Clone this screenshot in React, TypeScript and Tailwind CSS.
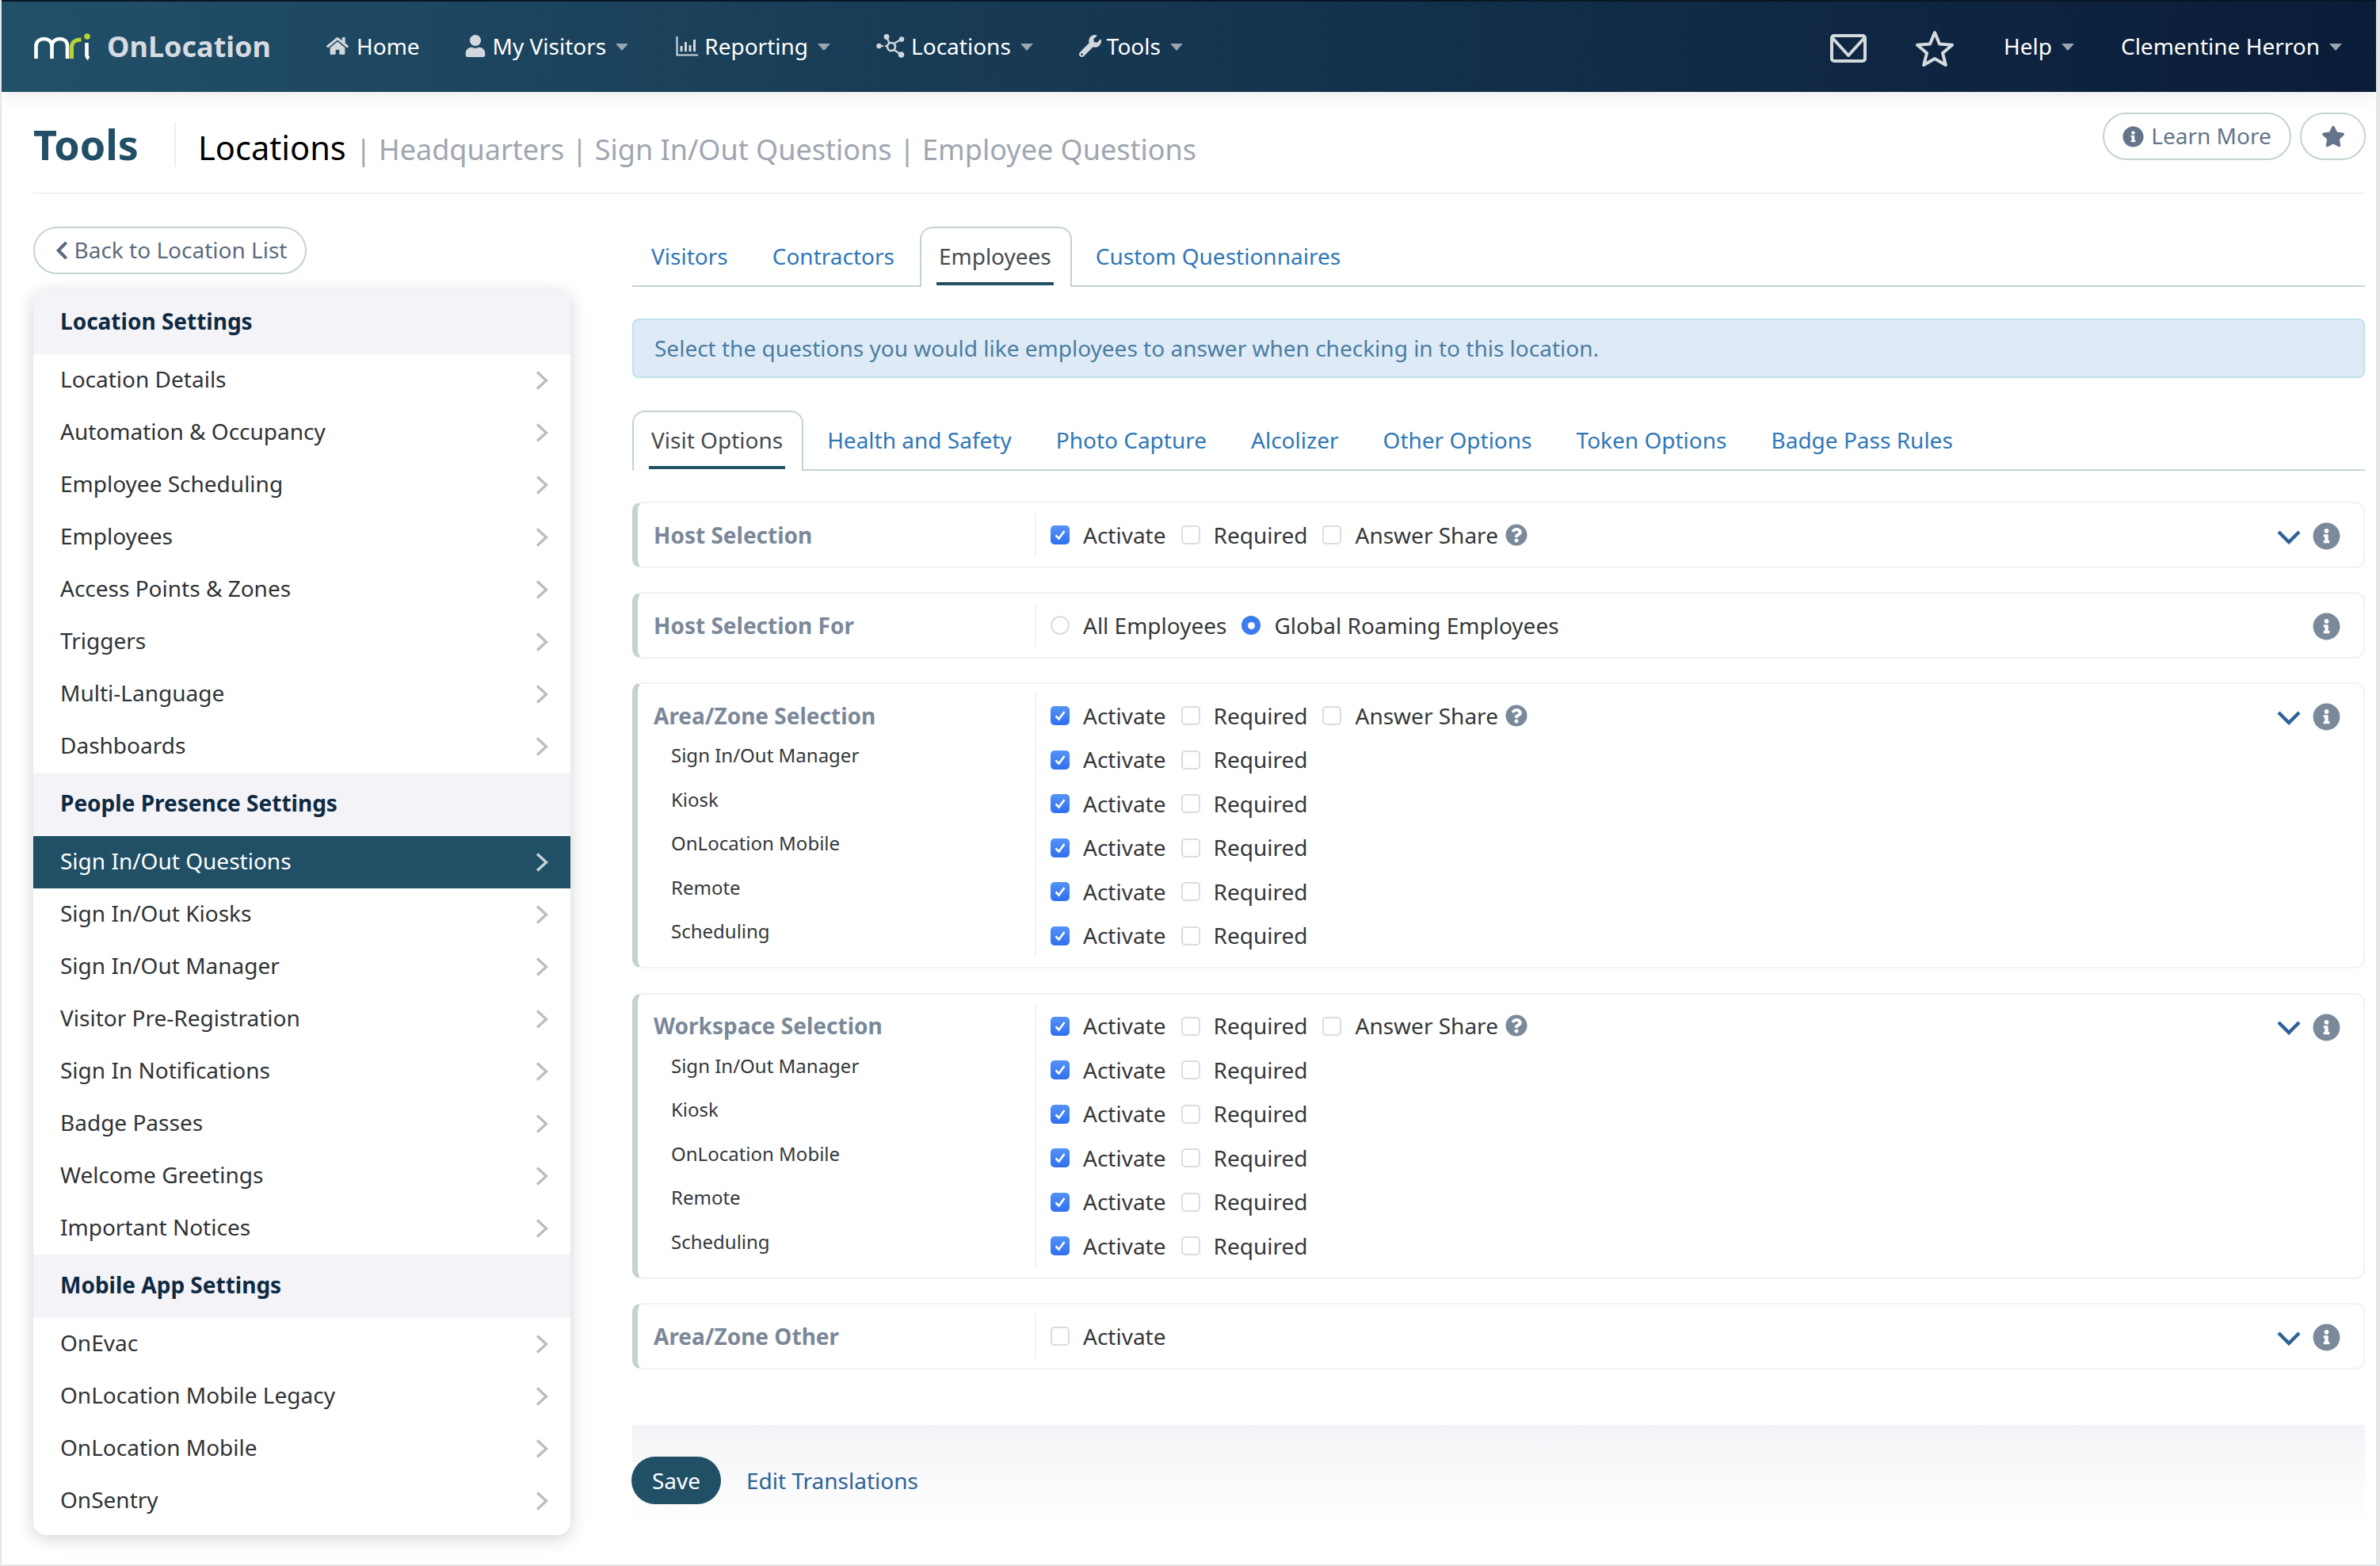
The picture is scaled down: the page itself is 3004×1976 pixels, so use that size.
import React from "react";
import { FaHome, FaUser, FaWrench, FaInfoCircle, FaQuestionCircle, FaStar, FaChevronLeft } from "react-icons/fa";

const Caret = () => (
  <span className="ml-[12px] mt-[3px] inline-block h-0 w-0 border-x-[8px] border-t-[9px] border-x-transparent border-t-[#9aa5ae]" />
);

const Logo = () => (
  <svg width="74" height="36" viewBox="0 0 74 36" fill="none" className="shrink-0">
    <path d="M3.5 33V17c0-6 5-9 10-9s10 3 10 9V33M23.5 17c0-6 5-9 10-9s9.500 3 9.500 9V33" stroke="#fff" strokeWidth="4.600" />
    <path d="M48.500 33V18c0-6 5-9 12-9" stroke="#b5d334" strokeWidth="5" />
    <path d="M67.500 13V28c0 3 1 4 2.500 5" stroke="#fff" strokeWidth="4.600" />
    <circle cx="68" cy="5" r="3.800" fill="#b5d334" />
  </svg>
);

const ChartIcon = () => (
  <svg width="28" height="26" viewBox="0 0 28 26" fill="none" stroke="#d1d7dd" className="shrink-0">
    <path d="M1.500 1V24.500H28" strokeWidth="2.200" />
    <path d="M7 20V13M12.500 20V8M18 20V12M23.500 20V5" strokeWidth="3" />
  </svg>
);

const NetworkIcon = () => (
  <svg width="36" height="30" viewBox="0 0 36 30" fill="#d1d7dd" stroke="#d1d7dd" className="shrink-0">
    <circle cx="3.500" cy="15" r="3.200" stroke="none" />
    <circle cx="13" cy="3.500" r="3.400" stroke="none" />
    <circle cx="32" cy="6.500" r="3.200" stroke="none" />
    <circle cx="31.500" cy="26" r="3.800" stroke="none" />
    <circle cx="19" cy="16" r="5" fill="none" strokeWidth="2.600" />
    <path d="M13 3.500L16.500 11.500M22.500 20L31.500 26M23 11.500L32 6.500" strokeWidth="2.200" fill="none" />
    <path d="M7 15H13" strokeWidth="1.800" strokeDasharray="2 2" fill="none" />
  </svg>
);

const EnvelopeIcon = () => (
  <svg width="46" height="36" viewBox="0 0 46 36" fill="none" stroke="#d5dade" strokeWidth="4" strokeLinejoin="round">
    <rect x="2" y="2" width="42" height="32" rx="3" />
    <path d="M3 5L23 27L43 5" />
  </svg>
);

const StarOutline = () => (
  <svg width="50" height="46" viewBox="0 0 50 46" fill="none" stroke="#d5dade" strokeWidth="4" strokeLinejoin="round">
    <path d="M25 3L31 17.500L47 18.800L35 29L38.800 44L25 36L11.200 44L15 29L3 18.800L19 17.500Z" />
  </svg>
);

const NavItem = ({ icon, label, caret = true, gap = "mr-[8px]", className = "" }: { icon?: React.ReactNode; label: string; caret?: boolean; gap?: string; className?: string }) => (
  <div className={`flex items-center ${className}`}>
    {icon && <span className={`flex items-center ${gap}`}>{icon}</span>}
    <span className="text-white">{label}</span>
    {caret && <Caret />}
  </div>
);

const Chevron = ({ light }: { light?: boolean }) => (
  <svg width="16" height="24" viewBox="0 0 16 24" fill="none" stroke={light ? "#c9d3d9" : "#bdbdbd"} strokeWidth="3.400">
    <path d="M2 1.500L13.500 12L2 22.500" />
  </svg>
);

const SECTIONS = [
  {
    title: "Location Settings",
    items: ["Location Details", "Automation & Occupancy", "Employee Scheduling", "Employees", "Access Points & Zones", "Triggers", "Multi-Language", "Dashboards"],
  },
  {
    title: "People Presence Settings",
    items: ["Sign In/Out Questions", "Sign In/Out Kiosks", "Sign In/Out Manager", "Visitor Pre-Registration", "Sign In Notifications", "Badge Passes", "Welcome Greetings", "Important Notices"],
  },
  {
    title: "Mobile App Settings",
    items: ["OnEvac", "OnLocation Mobile Legacy", "OnLocation Mobile", "OnSentry"],
  },
];

const Sidebar = () => (
  <div className="w-[678px] overflow-hidden rounded-[16px] bg-white pb-[10px] shadow-[0_4px_22px_rgba(0,0,0,0.18)]">
    {SECTIONS.map((s) => (
      <div key={s.title}>
        <div className="flex h-[80px] items-center bg-[#f3f3f8] pb-[4px] pl-[34px] font-bold text-[#0e2a43]">{s.title}</div>
        {s.items.map((it) => {
          const active = it === "Sign In/Out Questions";
          return (
            <div
              key={it}
              className={`flex h-[66px] items-center justify-between pl-[34px] pr-[28px] ${active ? "bg-[#204f66] text-white" : "text-[#2f3336]"}`}
            >
              <span className="pb-[4px]">{it}</span>
              <Chevron light={active} />
            </div>
          );
        })}
      </div>
    ))}
  </div>
);

const Tab = ({ label, active }: { label: string; active?: boolean }) =>
  active ? (
    <div className="relative z-10 -mb-[2px] -mr-[2px] flex h-[76px] flex-col rounded-t-[16px] border-x-2 border-t-2 border-[#c4d2d6] bg-white pl-[19px] pr-[21px] text-[#454a4f]">
      <div className="flex h-[72px] items-start border-b-4 border-[#204f66] px-[3px] pt-[14px]">{label}</div>
    </div>
  ) : (
    <div className="flex h-[74px] items-start px-[24px] pt-[16px] text-[#2e77b8]">{label}</div>
  );

const Check = ({ on }: { on?: boolean }) =>
  on ? (
    <span className="mt-[1px] flex h-[24px] w-[24px] shrink-0 items-center justify-center rounded-[5px] bg-linear-to-b from-[#5593f6] to-[#2f6fee]">
      <svg width="16" height="16" viewBox="0 0 16 16" fill="none" stroke="#fff" strokeWidth="2.600">
        <path d="M2.500 8.500L6.500 12.500L13.500 3" />
      </svg>
    </span>
  ) : (
    <span className="mt-[1px] h-[24px] w-[24px] shrink-0 rounded-[5px] border-2 border-[#dcdcdc] bg-white" />
  );

const Radio = ({ on }: { on?: boolean }) =>
  on ? (
    <span className="mt-[1px] flex h-[24px] w-[24px] shrink-0 items-center justify-center rounded-full bg-[#3b7cf0]">
      <span className="h-[9px] w-[9px] rounded-full bg-white" />
    </span>
  ) : (
    <span className="mt-[1px] h-[24px] w-[24px] shrink-0 rounded-full border-2 border-[#dcdcdc] bg-white" />
  );

const Opt = ({ on, label, radio, last }: { on?: boolean; label: string; radio?: boolean; last?: boolean }) => (
  <div className={`flex items-center gap-[17px] ${last ? "" : "mr-[19px]"}`}>
    {radio ? <Radio on={on} /> : <Check on={on} />}
    <span className="text-[#34383b]">{label}</span>
  </div>
);

const CheckRow = ({ share, required = true, on = true }: { share?: boolean; required?: boolean; on?: boolean }) => (
  <div className="flex h-[55.5px] items-center">
    <Opt on={on} label="Activate" />
    {required && <Opt label="Required" />}
    {share && (
      <>
        <Opt label="Answer Share" last />
        <FaQuestionCircle className="ml-[9px] text-[28px] text-[#7b8a9b]" />
      </>
    )}
  </div>
);

const Actions = ({ chevron = true }: { chevron?: boolean }) => (
  <div className="flex h-[55.5px] items-center justify-end gap-[15px] pr-[29px] pt-[4px]">
    {chevron && (
      <svg width="30" height="20" viewBox="0 0 30 20" fill="none" stroke="#2e6399" strokeWidth="4.400">
        <path d="M2 4L15 17L28 4" />
      </svg>
    )}
    <FaInfoCircle className="text-[35px] text-[#7b8a9b]" />
  </div>
);

const Field = ({ label, subs, children, chevron }: { label: string; subs?: string[]; children: React.ReactNode; chevron?: boolean }) => (
  <div className="flex rounded-[12px] border-y-2 border-r-2 border-l-[7px] border-y-[#f0f3f3] border-r-[#f0f3f3] border-l-[#c5d2d4] bg-white py-[12px]">
    <div className="w-[501px] shrink-0 pl-[20px]">
      <div className="flex h-[55.5px] items-center font-bold text-[#7a8899]">{label}</div>
      {subs && (
        <div className="-mt-[5px] pl-[22px] text-[24px] text-[#34383b]">
          {subs.map((s) => (
            <div key={s} className="flex h-[55.5px] items-center">{s}</div>
          ))}
        </div>
      )}
    </div>
    <div className="flex-1 border-l-2 border-[#f0f3f3] pl-[18px]">{children}</div>
    <Actions chevron={chevron} />
  </div>
);

const SUBS = ["Sign In/Out Manager", "Kiosk", "OnLocation Mobile", "Remote", "Scheduling"];

const Multi = () => (
  <>
    <CheckRow share />
    {SUBS.map((s) => (
      <CheckRow key={s} />
    ))}
  </>
);

export default function App() {
  return (
    <div className="flex h-[1976px] w-[3004px] flex-col overflow-hidden border-b-2 border-l-2 border-r-[5px] border-[#e4e7e9] bg-white font-['Noto_Sans',sans-serif] text-[28px]">
      <header className="relative z-20 flex h-[116px] shrink-0 items-center border-t-2 border-[#071527] bg-linear-to-r from-[#225069] to-[#0a1c38] pl-[40px] pr-[43px] shadow-[0_6px_20px_rgba(0,0,0,0.08)]">
        <Logo />
        <span className="ml-[19px] text-[36px] font-bold text-[#d5dbe1]">OnLocation</span>
        <nav className="mb-[3px] ml-[70px] flex items-center gap-[58px]">
          <NavItem icon={<FaHome className="text-[28px] text-[#d1d7dd]" />} label="Home" caret={false} gap="mr-[10px]" className="-mr-[2px]" />
          <NavItem icon={<FaUser className="text-[28px] text-[#d1d7dd]" />} label="My Visitors" className="mr-[2px]" />
          <NavItem icon={<ChartIcon />} label="Reporting" />
          <NavItem icon={<NetworkIcon />} label="Locations" />
          <NavItem icon={<FaWrench className="text-[28px] text-[#d1d7dd]" />} label="Tools" gap="mr-[7px]" />
        </nav>
        <div className="ml-auto flex items-center">
          <span className="mt-[3px]"><EnvelopeIcon /></span>
          <span className="ml-[61px] mt-[3px]"><StarOutline /></span>
          <span className="mb-[3px] ml-[62px]"><NavItem label="Help" /></span>
          <span className="mb-[3px] ml-[59px]"><NavItem label="Clementine Herron" /></span>
        </div>
      </header>

      <div className="ml-[40px] mr-[13px] flex h-[129px] shrink-0 items-start justify-between border-b-2 border-[#f0f3f3]">
        <div className="flex items-baseline pt-[31px]">
          <span className="text-[52px] font-bold leading-[70px] text-[#204f66]">Tools</span>
          <span className="ml-[45px] mr-[28px] h-[56px] self-center border-l-2 border-[#eceff0]" />
          <span className="text-[41.6px] text-black">Locations</span>
          <span className="ml-[12px] text-[36px] text-[#9fa6b2]">| Headquarters | Sign In/Out Questions | Employee Questions</span>
        </div>
        <div className="flex gap-[11px] pt-[26px]">
          <div className="flex h-[60px] w-[238px] items-center justify-center gap-[9px] rounded-full border-2 border-[#c4d2d6] pb-[2px] text-[#64748b]">
            <FaInfoCircle className="mt-[2px] text-[27px]" />
            <span>Learn More</span>
          </div>
          <div className="flex h-[60px] w-[83px] items-center justify-center rounded-full border-2 border-[#c4d2d6] text-[#64748b]">
            <FaStar className="text-[30px]" />
          </div>
        </div>
      </div>

      <div className="flex flex-1 pl-[40px] pr-[14px] pt-[41px]">
        <aside className="w-[678px] shrink-0">
          <div className="mb-[21px] flex h-[60px] w-[345px] items-center justify-center gap-[3px] rounded-full border-2 border-[#c4d2d6] pb-[2px] pr-[2px] text-[#5b6b80]">
            <FaChevronLeft className="mt-[2px] text-[26px]" />
            <span>Back to Location List</span>
          </div>
          <Sidebar />
        </aside>

        <main className="ml-[78px] flex flex-1 flex-col">
          <div className="flex gap-[8px] border-b-2 border-[#c4d2d6]">
            <Tab label="Visitors" />
            <Tab label="Contractors" />
            <Tab label="Employees" active />
            <Tab label="Custom Questionnaires" />
          </div>

          <div className="mt-[40px] flex h-[75px] items-center rounded-[8px] border-2 border-[#bfe3ee] bg-[#deebf6] pb-[2px] pl-[26px] text-[#4a7da3]">
            Select the questions you would like employees to answer when checking in to this location.
          </div>

          <div className="mt-[41px] flex gap-[8px] border-b-2 border-[#c4d2d6]">
            <Tab label="Visit Options" active />
            <Tab label="Health and Safety" />
            <Tab label="Photo Capture" />
            <Tab label="Alcolizer" />
            <Tab label="Other Options" />
            <Tab label="Token Options" />
            <Tab label="Badge Pass Rules" />
          </div>

          <div className="mt-[39px] flex flex-col gap-[30.5px]">
            <Field label="Host Selection" chevron>
              <CheckRow share />
            </Field>
            <Field label="Host Selection For" chevron={false}>
              <div className="flex h-[55.5px] items-center">
                <Opt radio label="All Employees" />
                <Opt radio on label="Global Roaming Employees" last />
              </div>
            </Field>
            <Field label="Area/Zone Selection" subs={SUBS} chevron>
              <Multi />
            </Field>
            <Field label="Workspace Selection" subs={SUBS} chevron>
              <Multi />
            </Field>
            <Field label="Area/Zone Other" chevron>
              <CheckRow required={false} on={false} />
            </Field>
          </div>

          <div className="mt-[70px] flex h-[130px] items-start gap-[32px] bg-linear-to-b from-[#f3f4f7] to-white pt-[40px]">
            <div className="-ml-[1px] flex h-[60px] w-[113px] items-center justify-center rounded-full bg-[#204f66] text-white">Save</div>
            <span className="self-start pt-[9px] text-[#2e6399]">Edit Translations</span>
          </div>
        </main>
      </div>
    </div>
  );
}
